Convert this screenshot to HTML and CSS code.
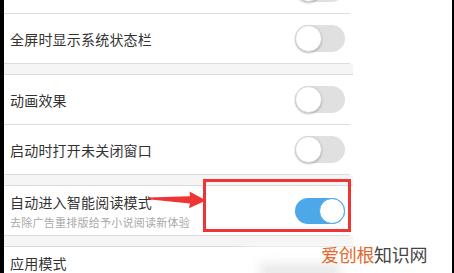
FILE: index.html
```html
<!DOCTYPE html>
<html lang="zh">
<head>
<meta charset="utf-8">
<title>设置</title>
<link rel="stylesheet" href="styles.css">
</head>
<body>
<div class="screen">
  <div class="edge-left"></div>
  <div class="list">
    <div class="row row-peek"><span class="title"></span><span class="toggle"><span class="knob"></span></span></div>
    <div class="row"><span class="title">全屏时显示系统状态栏</span><span class="toggle"><span class="knob"></span></span></div>
    <div class="gap"></div>
    <div class="row"><span class="title">动画效果</span><span class="toggle"><span class="knob"></span></span></div>
    <div class="row"><span class="title">启动时打开未关闭窗口</span><span class="toggle"><span class="knob"></span></span></div>
    <div class="gap"></div>
    <div class="row">
      <div class="texts">
        <span class="title">自动进入智能阅读模式</span>
        <span class="sub">去除广告重排版给予小说阅读新体验</span>
      </div>
      <span class="toggle on"><span class="knob"></span></span>
    </div>
    <div class="gap"></div>
    <div class="row row-top"><span class="title">应用模式</span></div>
  </div>
  <div class="spacer"></div>
  <div class="edge-right"></div>

  <svg class="annot" width="454" height="273" viewBox="0 0 454 273">
    <rect x="204.5" y="180.5" width="145" height="50" fill="none" stroke="#f03434" stroke-width="3"/>
    <polygon points="148,197.6 190,196.2 189.5,191.5 206,200.5 189,208.2 190,203.4 148,199.2" fill="#f03434"/>
  </svg>

  <div class="watermark">
    <div class="wm-blur"></div>
    <div class="wm-smudge"></div>
    <div class="wm-text"><span class="wm-accent">爱创根</span>知识网</div>
  </div>
</div>
</body>
</html>
```

FILE: styles.css
```css
html, body {
  margin: 0;
  padding: 0;
  background: #ffffff;
}

.screen {
  position: relative;
  width: 454px;
  height: 273px;
  overflow: hidden;
  display: flex;
  font-family: "Noto Sans CJK SC", "Noto Sans", sans-serif;
  background: #ffffff;
}

.edge-left {
  width: 4px;
  flex: none;
  background: #000000;
}

.edge-right {
  width: 2px;
  flex: none;
  background: #000000;
}

.spacer {
  flex: 1;
}

.list {
  width: 349px;
  flex: none;
  display: flex;
  flex-direction: column;
  margin-top: -36px;
}

.row {
  height: 49px;
  border-bottom: 1px solid #dcdcdc;
  margin-right: 3px;
  display: flex;
  align-items: center;
  justify-content: space-between;
  padding-left: 6px;
  background: #ffffff;
  flex: none;
}

.row-top {
  align-items: flex-start;
  padding-top: 6px;
  height: 60px;
}

.title {
  font-size: 14px;
  line-height: 20px;
  color: #333333;
  letter-spacing: 0.2px;
}

.texts {
  display: flex;
  flex-direction: column;
  gap: 2px;
  padding-top: 1px;
}

.sub {
  font-size: 11px;
  line-height: 16px;
  color: #a9a9a9;
  letter-spacing: 0.25px;
}

.gap {
  height: 10px;
  background: #f5f5f5;
  border-bottom: 1px solid #dcdcdc;
  flex: none;
}

.toggle {
  position: relative;
  width: 50px;
  height: 27px;
  border-radius: 14px;
  background: #e0e0e0;
  margin-right: 5px;
  flex: none;
  box-sizing: border-box;
}

.toggle .knob {
  position: absolute;
  left: 0;
  top: 0;
  width: 27px;
  height: 27px;
  border-radius: 50%;
  background: #ffffff;
  box-sizing: border-box;
  border: 1px solid #d4d4d4;
  box-shadow: 0 1px 2px rgba(0, 0, 0, 0.25);
}

.toggle.on {
  background: #4ca8e8;
  height: 26px;
}

.toggle.on .knob {
  left: auto;
  right: 0;
  width: 26px;
  height: 26px;
  border: 1.5px solid #4ca8e8;
  box-shadow: none;
}

.annot {
  position: absolute;
  left: 0;
  top: 0;
  pointer-events: none;
}

.watermark {
  position: absolute;
  left: 240px;
  top: 244px;
  width: 200px;
  height: 29px;
}

.wm-blur {
  position: absolute;
  left: 4px;
  top: 4px;
  width: 180px;
  height: 30px;
  background: #ffffff;
  filter: blur(4px);
  opacity: 0.95;
}

.wm-smudge {
  position: absolute;
  left: 20px;
  top: 20px;
  width: 80px;
  height: 14px;
  background: #e6e6e6;
  filter: blur(6px);
}

.wm-text {
  position: absolute;
  left: 81px;
  top: 0;
  font-size: 18px;
  line-height: 20px;
  color: #444444;
  letter-spacing: -0.3px;
  white-space: nowrap;
}

.wm-accent {
  color: #e2692c;
}
```
